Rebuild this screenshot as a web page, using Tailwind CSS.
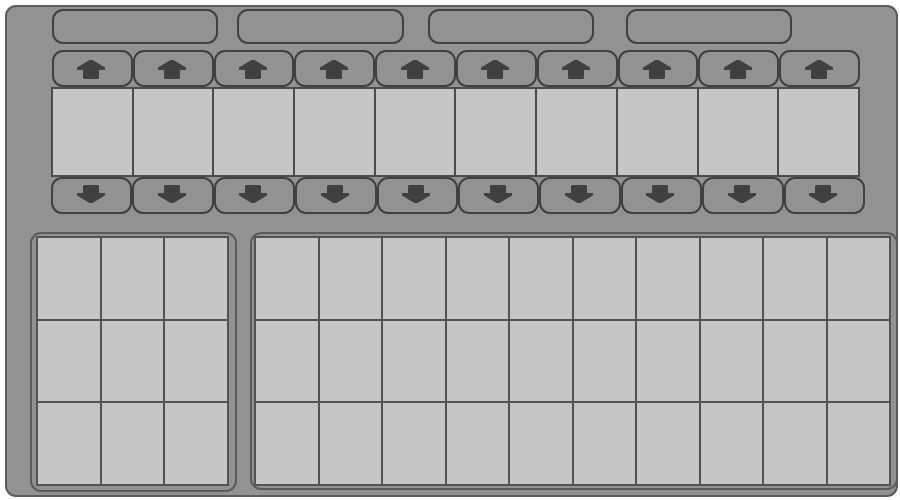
<!DOCTYPE html>
<html lang="en">
<head>
<meta charset="utf-8">
<title>Control panel</title>
<script src="https://cdn.jsdelivr.net/npm/@tailwindcss/browser@4"></script>
</head>
<body class="bg-white font-['Liberation_Sans',sans-serif]">
<svg class="hidden" aria-hidden="true">
  <symbol id="up" viewBox="0 0 28 19"><path fill="#404040" d="M12.5 0H15.5L28 7.5V10H22V18L21 19H7L6 18V10H0V7.5Z"/></symbol>
  <symbol id="down" viewBox="0 0 28 18"><path fill="#404040" d="M6 1L7 0H21L22 1V8H28V10.5L15.5 18H12.5L0 10.5V8H6Z"/></symbol>
</svg>
<main class="flex h-screen min-h-[400px] flex-col pt-[5px] pr-[2px] pb-[3px] pl-[5px]">
  <div class="flex flex-1 flex-col rounded-[11px] border-2 border-[#5b5b5b] bg-[#929292] pt-[2px]">
    <div class="mr-[104px] ml-[45px] flex h-[35px]">
      <input type="text" aria-label="Field 1" class="mr-[19px] min-w-0 flex-1 rounded-[11px] border-2 border-[#404040] px-2">
      <input type="text" aria-label="Field 2" class="mr-[24px] min-w-0 flex-1 rounded-[11px] border-2 border-[#404040] px-2">
      <input type="text" aria-label="Field 3" class="mr-[32px] min-w-0 flex-1 rounded-[11px] border-2 border-[#404040] px-2">
      <input type="text" aria-label="Field 4" class="min-w-0 flex-1 rounded-[11px] border-2 border-[#404040] px-2">
    </div>
    <div id="ups" class="mt-[6px] mr-[36px] ml-[45px] grid h-[37px] grid-cols-10"></div>
    <div id="slots" class="mr-[36px] ml-[44px] grid h-[90px] grid-cols-10 gap-[2px] border-2 border-[#4b4b4b] bg-[#4b4b4b]"></div>
    <div id="downs" class="mr-[31px] ml-[44px] grid h-[37px] grid-cols-10"></div>
    <div class="mt-[18px] -mr-[2px] ml-[23px] flex flex-1">
      <section aria-label="Small grid" class="mr-[13px] mb-[3px] flex w-[207px] rounded-[11px] border-2 border-[#5b5b5b] pt-[2px] pr-[6px] pb-[4px] pl-[4px]">
        <div id="left" class="grid flex-1 grid-cols-3 grid-rows-3 gap-[2px] border-2 border-[#535353] bg-[#535353]"></div>
      </section>
      <section aria-label="Large grid" class="mb-[5px] flex flex-1 rounded-[11px] border-2 border-[#5b5b5b] pt-[2px] pr-[5px] pb-[2px] pl-[2px]">
        <div id="right" class="grid flex-1 grid-cols-10 grid-rows-3 gap-[2px] border-2 border-[#535353] bg-[#535353]"></div>
      </section>
    </div>
  </div>
</main>
<script>
  const fill = (id, count, make) => {
    document.getElementById(id).innerHTML = Array.from({ length: count }, (_, i) => make(i + 1)).join('');
  };
  const cell = () => '<div class="bg-[#c6c6c6]"></div>';
  fill('ups', 10, n => `<button type="button" aria-label="Increase ${n}" class="flex items-center justify-center rounded-[11px] border-2 border-[#404040] pt-[2px] pr-[2px]"><svg class="h-[19px] w-[28px]"><use href="#up"/></svg></button>`);
  fill('downs', 10, n => `<button type="button" aria-label="Decrease ${n}" class="flex items-center justify-center rounded-[11px] border-2 border-[#404040] pr-[2px] pb-[3px]"><svg class="h-[18px] w-[28px]"><use href="#down"/></svg></button>`);
  fill('slots', 10, cell);
  fill('left', 9, cell);
  fill('right', 30, cell);
</script>
</body>
</html>
